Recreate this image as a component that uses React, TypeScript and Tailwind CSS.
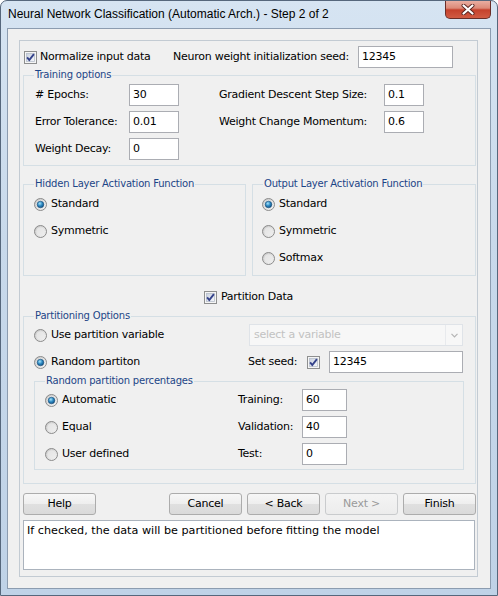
import React from 'react';

const CheckBox = ({ checked = false }: { checked?: boolean }) => (
    <svg width="13" height="13" viewBox="0 0 13 13" className="shrink-0">
        <defs>
            <linearGradient id="cbFill" x1="0" y1="0" x2="1" y2="1">
                <stop offset="0" stopColor="#c9d1de" />
                <stop offset="1" stopColor="#f7f9fc" />
            </linearGradient>
        </defs>
        <rect x="0.5" y="0.5" width="12" height="12" fill="#f5f5f5" stroke="#8e8f8f" />
        <rect x="2.5" y="2.5" width="8" height="8" fill="url(#cbFill)" stroke="#b7bfcb" strokeWidth="0.8" />
        {checked && <path d="M3.1 6.3 L5.3 9 L9.9 3.2" fill="none" stroke="#34428b" strokeWidth="1.9" />}
    </svg>
);

const Radio = ({ checked = false }: { checked?: boolean }) => (
    <svg width="13" height="13" viewBox="0 0 13 13" className="shrink-0">
        <defs>
            <linearGradient id="rbFill" x1="0" y1="0" x2="1" y2="1">
                <stop offset="0" stopColor="#c4c4c4" />
                <stop offset="1" stopColor="#f8f8f8" />
            </linearGradient>
            <radialGradient id="rbDot" cx="0.4" cy="0.35" r="0.7">
                <stop offset="0" stopColor="#a8e4fb" />
                <stop offset="0.5" stopColor="#2e8ac3" />
                <stop offset="1" stopColor="#0e4b7d" />
            </radialGradient>
        </defs>
        <circle cx="6.5" cy="6.5" r="6" fill="url(#rbFill)" stroke="#8b8b8b" />
        <circle cx="6.5" cy="6.5" r="4.2" fill="#ededed" opacity="0.7" />
        {checked && <circle cx="6.5" cy="6.5" r="3.3" fill="url(#rbDot)" stroke="#1a4d78" strokeWidth="0.6" />}
    </svg>
);

const Field = ({ value, className = '' }: { value: string; className?: string }) => (
    <div className={`h-[22px] bg-white border border-[#abadb3] pl-[3px] flex items-center ${className}`}>
        {value}
    </div>
);

const Group = ({ legend, className = '', children }: { legend: string; className?: string; children: React.ReactNode }) => (
    <div className={`relative border border-[#d5dfe5] ${className}`}>
        <span className="absolute -top-[8px] left-[10px] bg-[#f0f0f0] px-[1px] leading-[14px] text-[10px] tracking-[-0.2px] text-[#1c4587]">{legend}</span>
        {children}
    </div>
);

const RadioRow = ({ label, checked = false }: { label: string; checked?: boolean }) => (
    <div className="h-[27px] flex items-center">
        <Radio checked={checked} />
        <span className="ml-[4px]">{label}</span>
    </div>
);

const Button = ({ label, disabled = false, className = '' }: { label: string; disabled?: boolean; className?: string }) => (
    <div
        className={`w-[73px] h-[22px] rounded-[3px] border flex items-center justify-center ${
            disabled
                ? 'border-[#c9cbcd] bg-[linear-gradient(#f4f4f4,#ececec)] text-[#9a9a9a]'
                : 'border-[#acacac] bg-[linear-gradient(#f7f7f7_0%,#eeeeee_50%,#e0e0e0_51%,#dadada_100%)] text-black'
        } ${className}`}
    >
        {label}
    </div>
);

export default function App() {
    return (
        <div className="w-[498px] h-[596px] overflow-hidden bg-[linear-gradient(180deg,#d6e4f2_0%,#c8d9eb_40%,#bfd2e7_100%)] border border-[#56677c] rounded-t-[7px] flex flex-col font-['DejaVu_Sans',Verdana,sans-serif] text-[11px] tracking-[-0.25px] text-black">
            {/* title bar */}
            <div className="h-[27px] flex shrink-0">
                <span className="pl-[7px] pt-[6px] leading-[15px] text-[12px] tracking-normal font-['Liberation_Sans',Arial,sans-serif] text-black">
                    Neural Network Classification (Automatic Arch.) - Step 2 of 2
                </span>
                <div className="ml-auto mr-[6px] w-[46px] h-[19px] -mt-[1px] rounded-b-[5px] border border-t-0 border-[#6a2e28] bg-[linear-gradient(#ebb3a7_0%,#dc8a78_45%,#c5412c_55%,#d15b43_100%)] flex items-center justify-center">
                    <svg width="14" height="11" viewBox="0 0 14 11">
                        <path d="M2.5 1.5 L11.5 9.5 M11.5 1.5 L2.5 9.5" stroke="#5a2520" strokeWidth="4" strokeLinecap="round" />
                        <path d="M2.5 1.5 L11.5 9.5 M11.5 1.5 L2.5 9.5" stroke="#ffffff" strokeWidth="2.2" strokeLinecap="round" />
                    </svg>
                </div>
            </div>

            {/* client area */}
            <div className="ml-[6px] w-[484px] h-[561px] border border-[#8c9cb0] bg-[#f0f0f0] pt-[11px] pl-[11px]">
                <div className="w-[459px] h-[537px] border border-[#c3cbd3] pl-[3px] pr-[1px]">
                    {/* row 1 */}
                    <div className="h-[22px] mt-[5px] flex items-center">
                        <span className="ml-[1px]"><CheckBox checked /></span>
                        <span className="ml-[3px] w-[133px]">Normalize input data</span>
                        <span className="w-[185px]">Neuron weight initialization seed:</span>
                        <Field value="12345" className="w-[95px]" />
                    </div>

                    {/* training options */}
                    <Group legend="Training options" className="mt-[7px] w-[453px] h-[91px] pl-[11px] pt-[8px]">
                        <div className="grid grid-cols-[94px_50px_40px_165px_40px] gap-y-[5px] items-center">
                            <span># Epochs:</span>
                            <Field value="30" />
                            <span />
                            <span>Gradient Descent Step Size:</span>
                            <Field value="0.1" />
                            <span>Error Tolerance:</span>
                            <Field value="0.01" />
                            <span />
                            <span>Weight Change Momentum:</span>
                            <Field value="0.6" />
                            <span>Weight Decay:</span>
                            <Field value="0" />
                        </div>
                    </Group>

                    {/* activation functions */}
                    <div className="mt-[18px] flex gap-[6px]">
                        <Group legend="Hidden Layer Activation Function" className="w-[223px] h-[92px] pl-[10px] pt-[6px]">
                            <RadioRow label="Standard" checked />
                            <RadioRow label="Symmetric" />
                        </Group>
                        <Group legend="Output Layer Activation Function" className="w-[224px] h-[92px] pl-[9px] pt-[6px]">
                            <RadioRow label="Standard" checked />
                            <RadioRow label="Symmetric" />
                            <RadioRow label="Softmax" />
                        </Group>
                    </div>

                    {/* partition data */}
                    <div className="mt-[13px] h-[16px] flex items-center justify-center pr-[2px]">
                        <CheckBox checked />
                        <span className="ml-[4px]">Partition Data</span>
                    </div>

                    {/* partitioning options */}
                    <Group legend="Partitioning Options" className="mt-[11px] w-[453px] h-[168px] pl-[10px] pt-[7px]">
                        <div className="grid grid-cols-[215px_214px] gap-y-[5px]">
                            <div className="h-[22px] flex items-center">
                                <Radio />
                                <span className="ml-[4px]">Use partition variable</span>
                            </div>
                            <div className="h-[22px] border border-[#dfe3e8] bg-[#f7f7f7] flex items-center">
                                <span className="pl-[4px] text-[#c2c2c2] flex-1">select a variable</span>
                                <div className="w-[17px] h-full border-l border-[#e8eaed] flex items-center justify-center">
                                    <svg width="7" height="5" viewBox="0 0 7 5">
                                        <path d="M0.5 0.8 L3.5 3.8 L6.5 0.8" fill="none" stroke="#b4b4b4" strokeWidth="1.2" />
                                    </svg>
                                </div>
                            </div>
                            <div className="h-[22px] flex items-center">
                                <Radio checked />
                                <span className="ml-[4px]">Random partiton</span>
                            </div>
                            <div className="h-[22px] flex items-center -ml-[1px]">
                                <span className="w-[59px]">Set seed:</span>
                                <CheckBox checked />
                                <Field value="12345" className="ml-[9px] w-[134px]" />
                            </div>
                        </div>

                        <Group legend="Random partition percentages" className="mt-[8px] w-[430px] h-[89px] pl-[10px] pt-[7px]">
                            <div className="grid grid-cols-[193px_64px_45px] gap-y-[5px] items-center">
                                <div className="h-[22px] flex items-center">
                                    <Radio checked />
                                    <span className="ml-[4px]">Automatic</span>
                                </div>
                                <span>Training:</span>
                                <Field value="60" />
                                <div className="h-[22px] flex items-center">
                                    <Radio />
                                    <span className="ml-[4px]">Equal</span>
                                </div>
                                <span>Validation:</span>
                                <Field value="40" />
                                <div className="h-[22px] flex items-center">
                                    <Radio />
                                    <span className="ml-[4px]">User defined</span>
                                </div>
                                <span>Test:</span>
                                <Field value="0" />
                            </div>
                        </Group>
                    </Group>

                    {/* buttons */}
                    <div className="mt-[9px] w-[453px] flex">
                        <Button label="Help" />
                        <div className="ml-auto flex gap-[5px]">
                            <Button label="Cancel" />
                            <Button label="< Back" />
                            <Button label="Next >" disabled />
                            <Button label="Finish" />
                        </div>
                    </div>

                    {/* message */}
                    <div className="mt-[5px] w-[452px] h-[50px] bg-white border border-[#abb3bd] pl-[3px] pt-[3px] leading-[14px] text-[11.2px] tracking-normal">
                        If checked, the data will be partitioned before fitting the model
                    </div>
                </div>
            </div>
        </div>
    );
}
